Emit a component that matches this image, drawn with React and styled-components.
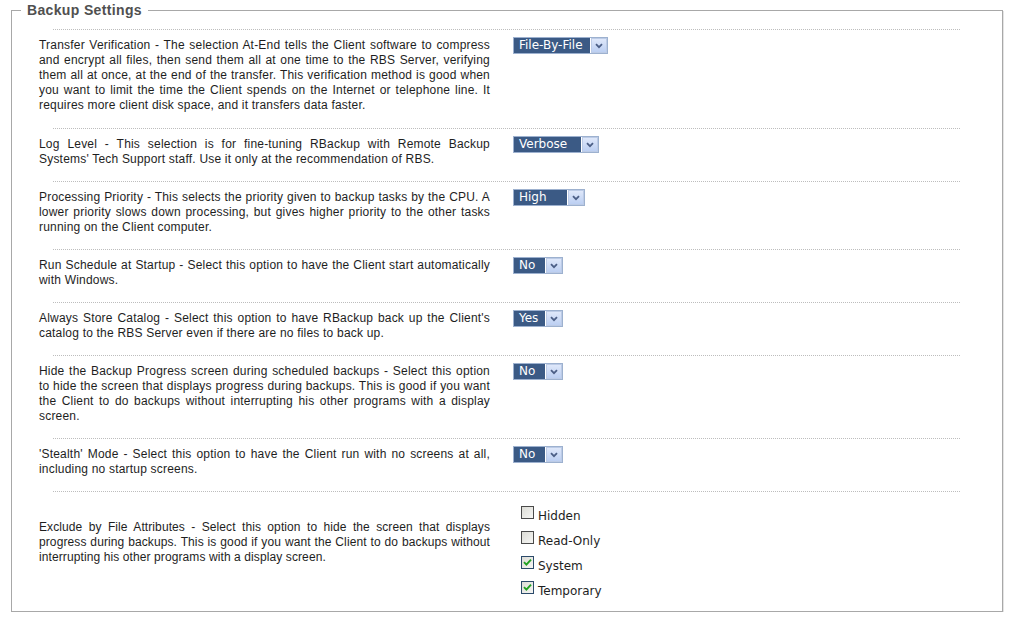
import React from 'react';
import styled, { createGlobalStyle } from 'styled-components';

const GlobalStyle = createGlobalStyle`
  html, body {
    margin: 0;
    padding: 0;
    background: #ffffff;
  }
  body {
    font-family: "Liberation Sans", Arial, sans-serif;
  }
`;

const Page = styled.div`
  width: 1019px;
  padding: 2px 0 0 11px;
  box-sizing: border-box;
`;

const Fieldset = styled.fieldset`
  width: 992px;
  height: 610px;
  margin: 0;
  padding: 0;
  box-sizing: border-box;
  border: 1px solid #a8a8a8;
  box-shadow: 1px 1px 0 #e4e4e4;
  min-width: 0;
`;

const Legend = styled.legend`
  margin-left: 9px;
  padding: 0 6px;
  font: bold 14px/16px "Liberation Sans", Arial, sans-serif;
  color: #505050;
  letter-spacing: 0.35px;
`;

const List = styled.div`
  padding-top: 11px;
`;

const Item = styled.div`
  display: flex;
  flex-direction: column;
`;

const Divider = styled.div`
  margin-left: 41px;
  width: 907px;
  border-top: 1px dotted #bdbdbd;
`;

const ItemBody = styled.div`
  display: flex;
  align-items: flex-start;
  gap: 23px;
  padding: 8px 0 14px 27px;

  ${Item}:first-child & {
    padding-bottom: 15px;
  }
`;

const Desc = styled.p`
  margin: 0;
  padding-top: ${p => p.$offset || 0}px;
  width: 451px;
  flex: none;
  font-size: 12px;
  line-height: 15px;
  letter-spacing: ${p => p.$spacing ?? 0.2}px;
  color: #1e1e1e;
  text-align: justify;
`;

const SelectBox = styled.span`
  display: inline-flex;
  margin-top: -1px;
  width: ${p => p.$w}px;
  height: 17px;
  box-sizing: border-box;
  border: 1px solid #9db1cf;
  background: #fff;
`;

const SelectValue = styled.span`
  flex: 1;
  background: #3b5a85;
  color: #ffffff;
  font: 12px/15px "DejaVu Sans", Verdana, sans-serif;
  padding-left: 5px;
  white-space: nowrap;
  overflow: hidden;
`;

const SelectArrow = styled.span`
  width: 16px;
  flex: none;
  margin-left: 1px;
  box-sizing: border-box;
  border: 1px solid #bccbe6;
  background: linear-gradient(#dfe8fa, #bccff2);
  display: flex;
  align-items: center;
  justify-content: center;
`;

const CheckList = styled.div`
  display: flex;
  flex-direction: column;
  padding: 6px 0 0 8px;
`;

const CheckRow = styled.label`
  display: flex;
  align-items: flex-start;
  gap: 4px;
  height: 25px;
  font: 12px/16px "DejaVu Sans", Verdana, sans-serif;
  color: #1e1e1e;
`;

const Box = styled.span`
  width: 13px;
  height: 13px;
  flex: none;
  box-sizing: border-box;
  border: 1px solid ${p => (p.$checked ? '#2b4a6a' : '#4a4a4a')};
  background: linear-gradient(135deg, #dcdcd6, #f6f6f4);
  display: flex;
  align-items: center;
  justify-content: center;
`;

const CheckLabel = styled.span`
  padding-top: 2px;
`;

const Chevron = () => (
  <svg width="8" height="6" viewBox="0 0 8 6">
    <path d="M1 1.2 L4 4.2 L7 1.2" fill="none" stroke="#4c5f86" strokeWidth="1.8" />
  </svg>
);

const Tick = () => (
  <svg width="9" height="9" viewBox="0 0 9 9">
    <path d="M1 4.2 L3.4 6.6 L8 1.6" fill="none" stroke="#21a121" strokeWidth="1.9" />
  </svg>
);

const Select = ({ value, width }) => (
  <SelectBox $w={width}>
    <SelectValue>{value}</SelectValue>
    <SelectArrow><Chevron /></SelectArrow>
  </SelectBox>
);

const Check = ({ label, checked }) => (
  <CheckRow>
    <Box $checked={checked}>{checked && <Tick />}</Box>
    <CheckLabel>{label}</CheckLabel>
  </CheckRow>
);

const settings = [
  {
    text: 'Transfer Verification - The selection At-End tells the Client software to compress and encrypt all files, then send them all at one time to the RBS Server, verifying them all at once, at the end of the transfer. This verification method is good when you want to limit the time the Client spends on the Internet or telephone line. It requires more client disk space, and it transfers data faster.',
    value: 'File-By-File',
    width: 95,
  },
  {
    text: "Log Level - This selection is for fine-tuning RBackup with Remote Backup Systems' Tech Support staff. Use it only at the recommendation of RBS.",
    value: 'Verbose',
    width: 86,
  },
  {
    text: 'Processing Priority - This selects the priority given to backup tasks by the CPU. A lower priority slows down processing, but gives higher priority to the other tasks running on the Client computer.',
    value: 'High',
    width: 72,
  },
  {
    text: 'Run Schedule at Startup - Select this option to have the Client start automatically with Windows.',
    value: 'No',
    width: 50,
  },
  {
    text: "Always Store Catalog - Select this option to have RBackup back up the Client's catalog to the RBS Server even if there are no files to back up.",
    value: 'Yes',
    width: 50,
  },
  {
    text: 'Hide the Backup Progress screen during scheduled backups - Select this option to hide the screen that displays progress during backups. This is good if you want the Client to do backups without interrupting his other programs with a display screen.',
    value: 'No',
    width: 50,
  },
  {
    text: "'Stealth' Mode - Select this option to have the Client run with no screens at all, including no startup screens.",
    value: 'No',
    width: 50,
  },
];

const attributes = [
  { label: 'Hidden', checked: false },
  { label: 'Read-Only', checked: false },
  { label: 'System', checked: true },
  { label: 'Temporary', checked: true },
];

export default function App() {
  return (
    <Page>
      <GlobalStyle />
      <Fieldset>
        <Legend>Backup Settings</Legend>
        <List>
          {settings.map((s, i) => (
            <Item key={i}>
              <Divider />
              <ItemBody>
                <Desc>{s.text}</Desc>
                <Select value={s.value} width={s.width} />
              </ItemBody>
            </Item>
          ))}
          <Item>
            <Divider />
            <ItemBody>
              <Desc $offset={20} $spacing={0.1}>
                Exclude by File Attributes - Select this option to hide the screen that displays progress during backups. This is good if you want the Client to do backups without interrupting his other programs with a display screen.
              </Desc>
              <CheckList>
                {attributes.map(a => (
                  <Check key={a.label} label={a.label} checked={a.checked} />
                ))}
              </CheckList>
            </ItemBody>
          </Item>
        </List>
      </Fieldset>
    </Page>
  );
}
